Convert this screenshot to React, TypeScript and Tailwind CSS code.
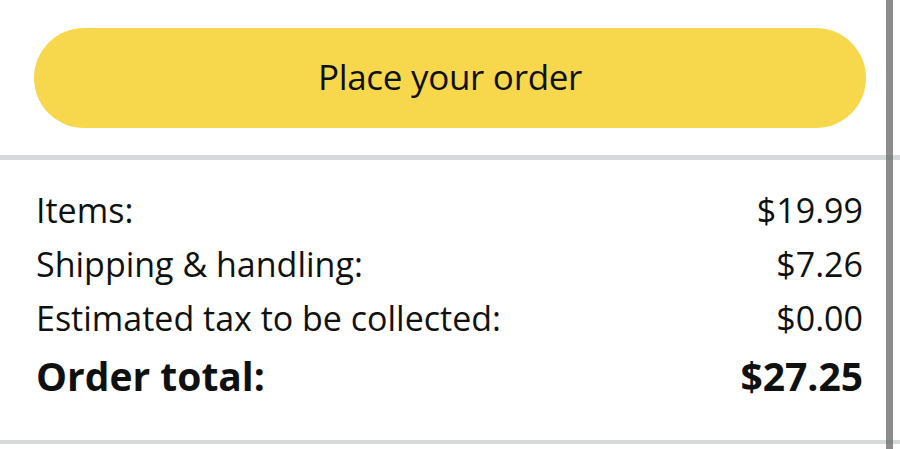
import React from "react";

const rows = [
  { label: "Items:", value: "$19.99" },
  { label: "Shipping & handling:", value: "$7.26" },
  { label: "Estimated tax to be collected:", value: "$0.00" },
];

const App = () => {
  return (
    <div className="relative flex h-[449px] w-[900px] flex-col overflow-hidden bg-white font-['Open_Sans',sans-serif] text-[#0f1111]">
      <div className="pt-[28px] pr-[34px] pb-[27px] pl-[34px]">
        <button className="flex h-[100px] w-[832px] items-center justify-center rounded-full bg-[#f7d84d] pb-[2px] text-[35px] tracking-[-0.3px]">
          Place your order
        </button>
      </div>
      <div className="h-[5px] bg-[#d5d9d9]" />
      <div className="flex w-[863px] flex-col pt-[23px] pl-[36px]">
        {rows.map((r) => (
          <div key={r.label} className="flex h-[54px] items-center justify-between text-[34px]">
            <span>{r.label}</span>
            <span>{r.value}</span>
          </div>
        ))}
        <div className="flex h-[62px] items-center justify-between text-[39px] font-bold">
          <span>Order total:</span>
          <span>$27.25</span>
        </div>
      </div>
      <div className="mt-auto mb-[5px] h-[4px] bg-[#d5d9d9]" />
      {/* overlay scrollbar */}
      <div className="absolute top-0 left-[886px] h-full w-[7px] bg-[#6f6f6f]/80" />
    </div>
  );
};

export default App;
